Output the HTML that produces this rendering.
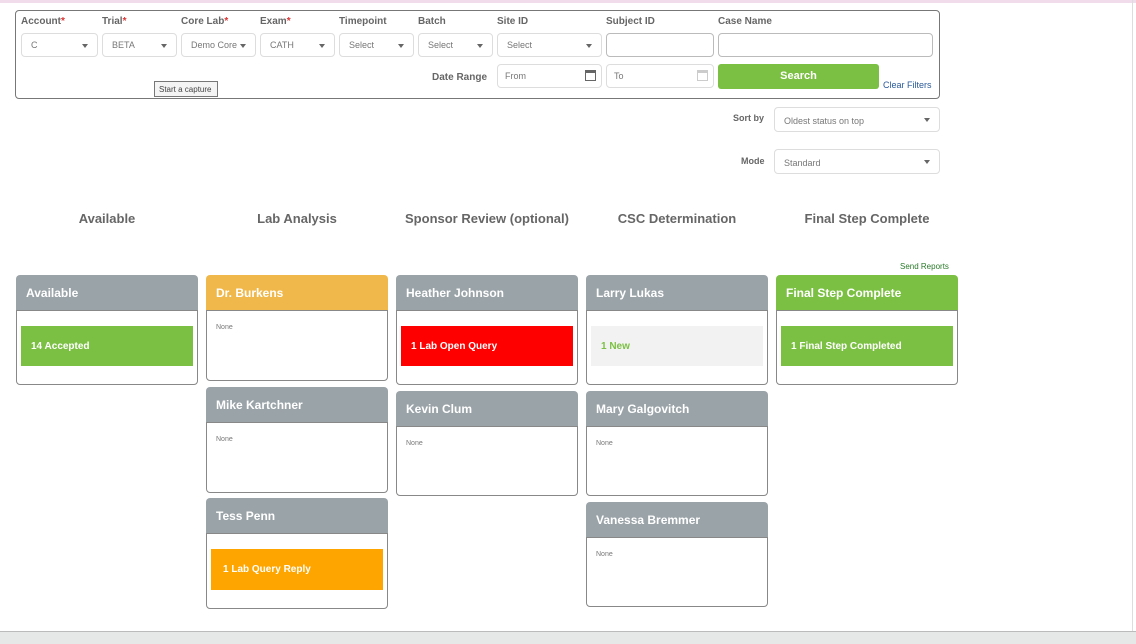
<!DOCTYPE html>
<html><head><style>
*{box-sizing:border-box;margin:0;padding:0}
body{width:1136px;height:644px;background:#fff;font-family:"Liberation Sans",sans-serif;position:relative;overflow:hidden}
.a{position:absolute}
.top{left:0;top:0;width:1136px;height:3px;background:#f0dcea}
.bot{left:0;top:631px;width:1136px;height:13px;background:#e6e8e8;border-top:1px solid #bbb}
.filt{left:15px;top:10px;width:925px;height:89px;border:1px solid #777;border-radius:4px}
.lbl{font-size:10px;font-weight:bold;color:#666}
.lbl i{color:#d33;font-style:normal}
.sel{height:24px;border:1px solid #ddd;border-radius:4px;font-size:9px;color:#777;padding:6px 0 0 9px}
.sel:after{content:"";position:absolute;right:9px;top:10px;border:3px solid transparent;border-top:4px solid #666}
.inp{height:24px;border:1px solid #bbb;border-radius:4px;font-size:9px;color:#777;padding:6px 0 0 7px}
.h{font-size:13px;font-weight:bold;color:#666;text-align:center;width:182px}
.hd{height:35px;border-radius:4px 4px 0 0;background:#9aa3a8;color:#fff;font-weight:bold;font-size:12px;padding:11px 0 0 10px}
.bd{border:1px solid #888;border-radius:0 0 4px 4px;background:#fff}
.none{font-size:7px;color:#777;padding:13px 0 0 9px}
.box{position:absolute;left:4px;right:4px;height:40px;color:#fff;font-weight:bold;font-size:10px;padding:15px 0 0 10px}
</style></head><body>
<div class="a top"></div>
<div class="a filt"></div>
<div class="a lbl" style="left:21px;top:16px">Account<i>*</i></div>
<div class="a lbl" style="left:102px;top:16px">Trial<i>*</i></div>
<div class="a lbl" style="left:181px;top:16px">Core Lab<i>*</i></div>
<div class="a lbl" style="left:260px;top:16px">Exam<i>*</i></div>
<div class="a lbl" style="left:339px;top:16px">Timepoint</div>
<div class="a lbl" style="left:418px;top:16px">Batch</div>
<div class="a lbl" style="left:497px;top:16px">Site ID</div>
<div class="a lbl" style="left:606px;top:16px">Subject ID</div>
<div class="a lbl" style="left:718px;top:16px">Case Name</div>
<div class="a sel" style="left:21px;top:33px;width:77px">C</div>
<div class="a sel" style="left:102px;top:33px;width:75px">BETA</div>
<div class="a sel" style="left:181px;top:33px;width:75px">Demo Core</div>
<div class="a sel" style="left:260px;top:33px;width:75px">CATH</div>
<div class="a sel" style="left:339px;top:33px;width:75px">Select</div>
<div class="a sel" style="left:418px;top:33px;width:75px">Select</div>
<div class="a sel" style="left:497px;top:33px;width:105px">Select</div>
<div class="a inp" style="left:606px;top:33px;width:108px"></div>
<div class="a inp" style="left:718px;top:33px;width:215px"></div>
<div class="a lbl" style="left:432px;top:72px">Date Range</div>
<div class="a inp" style="left:497px;top:64px;width:105px;border-color:#ddd">From<span style="position:absolute;right:5px;top:5px;width:11px;height:11px;border:1px solid #666;border-top-width:3px"></span></div>
<div class="a inp" style="left:606px;top:64px;width:108px;border-color:#ddd">To<span style="position:absolute;right:5px;top:5px;width:11px;height:11px;border:1px solid #ccc;border-top-width:3px"></span></div>
<div class="a" style="left:718px;top:64px;width:161px;height:25px;background:#7bc043;border-radius:3px;color:#fff;font-weight:bold;font-size:11px;text-align:center;padding-top:6px">Search</div>
<div class="a" style="left:883px;top:80px;font-size:9px;color:#2a5a9a">Clear Filters</div>
<div class="a" style="left:154px;top:81px;width:64px;height:16px;border:1px solid #777;background:#f4f4f4;font-size:8px;color:#444;padding:3px 0 0 4px">Start a capture</div>
<div class="a lbl" style="left:733px;top:113px;font-size:9px">Sort by</div>
<div class="a sel" style="left:774px;top:107px;width:166px;height:25px;padding-top:8px">Oldest status on top</div>
<div class="a lbl" style="left:741px;top:156px;font-size:9px">Mode</div>
<div class="a sel" style="left:774px;top:149px;width:166px;height:25px;padding-top:8px">Standard</div>
<div class="a h" style="left:16px;top:211px">Available</div>
<div class="a h" style="left:206px;top:211px">Lab Analysis</div>
<div class="a h" style="left:396px;top:211px">Sponsor Review (optional)</div>
<div class="a h" style="left:586px;top:211px">CSC Determination</div>
<div class="a h" style="left:776px;top:211px">Final Step Complete</div>
<div class="a" style="left:900px;top:262px;font-size:8px;color:#2a7a2a">Send Reports</div>

<div class="a" style="left:16px;top:275px;width:182px"><div class="hd">Available</div><div class="bd" style="height:75px;position:relative"><div class="box" style="top:15px;background:#7bc043">14 Accepted</div></div></div>
<div class="a" style="left:206px;top:275px;width:182px"><div class="hd" style="background:#f0b84a">Dr. Burkens</div><div class="bd" style="height:71px"><div class="none">None</div></div></div>
<div class="a" style="left:206px;top:387px;width:182px"><div class="hd">Mike Kartchner</div><div class="bd" style="height:71px"><div class="none">None</div></div></div>
<div class="a" style="left:206px;top:498px;width:182px"><div class="hd">Tess Penn</div><div class="bd" style="height:76px;position:relative"><div class="box" style="top:15px;background:#ffa500;height:41px;padding-top:15px;padding-left:12px">1 Lab Query Reply</div></div></div>
<div class="a" style="left:396px;top:275px;width:182px"><div class="hd">Heather Johnson</div><div class="bd" style="height:75px;position:relative"><div class="box" style="top:15px;background:#ff0000">1 Lab Open Query</div></div></div>
<div class="a" style="left:396px;top:391px;width:182px"><div class="hd">Kevin Clum</div><div class="bd" style="height:70px"><div class="none">None</div></div></div>
<div class="a" style="left:586px;top:275px;width:182px"><div class="hd">Larry Lukas</div><div class="bd" style="height:75px;position:relative"><div class="box" style="top:15px;background:#f2f2f2;color:#7bc043">1 New</div></div></div>
<div class="a" style="left:586px;top:391px;width:182px"><div class="hd">Mary Galgovitch</div><div class="bd" style="height:70px"><div class="none">None</div></div></div>
<div class="a" style="left:586px;top:502px;width:182px"><div class="hd">Vanessa Bremmer</div><div class="bd" style="height:70px"><div class="none">None</div></div></div>
<div class="a" style="left:776px;top:275px;width:182px"><div class="hd" style="background:#7bc043">Final Step Complete</div><div class="bd" style="height:75px;position:relative"><div class="box" style="top:15px;background:#7bc043">1 Final Step Completed</div></div></div>
<div class="a" style="left:1132px;top:0;width:1px;height:631px;background:#ddd"></div>
<div class="a bot"></div>
</body></html>
